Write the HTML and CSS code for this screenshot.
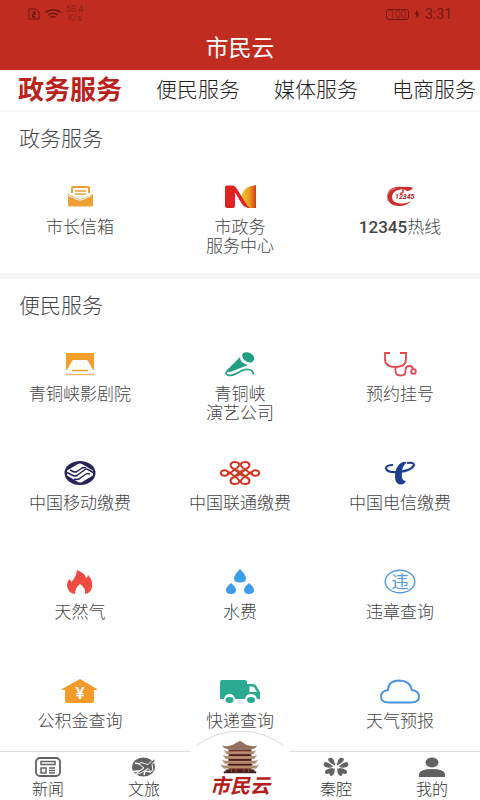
FILE: index.html
```html
<!DOCTYPE html>
<html lang="zh-CN">
<head>
<meta charset="utf-8">
<meta name="viewport" content="width=device-width, initial-scale=1">
<title>市民云</title>
<link rel="stylesheet" href="styles.css">
</head>
<body>
<div class="app">
  <header class="header">
    <div class="status">
      <div class="status-group">
        <svg class="status-sim" viewBox="0 0 12 12"><path d="M1 1h7l3 3v7H1z M4.500 4h3v2h-3v3h3 M6 3v7" fill="none" stroke="currentColor"/></svg>
        <svg class="status-wifi" viewBox="0 0 18 12"><path d="M1 4.500Q9-1 17 4.500M4 7Q9 3.500 14 7M6.500 9.500Q9 7.500 11.500 9.500" fill="none" stroke="currentColor" stroke-width="1.500"/></svg>
        <span class="status-speed">58.4<br>K/s</span>
      </div>
      <div class="status-group">
        <span class="status-battery">100</span>
        <svg class="status-bolt" viewBox="0 0 8 12"><path d="M4 1 1 6.500h2L4 11 7 5.500H5z" fill="currentColor"/></svg>
        <span class="status-time">3:31</span>
      </div>
    </div>
    <h1 class="title">市民云</h1>
  </header>

  <nav class="tabs" aria-label="服务分类">
    <a class="tab tab-active" href="#gov">政务服务</a>
    <a class="tab" href="#life">便民服务</a>
    <a class="tab" href="#media">媒体服务</a>
    <a class="tab" href="#shop">电商服务</a>
  </nav>

  <main class="content">
    <section class="section" id="gov">
      <h2 class="section-title">政务服务</h2>
      <div class="grid">
        <a class="item" href="#mail">
          <svg class="icon" viewBox="0 0 42 26">
            <path d="M13 9V4q0-1 1-1h15q1 0 1 1v5" fill="none" stroke="#eda135" stroke-width="2"/>
            <path d="M16 7h11M16 10h11" stroke="#eda135" stroke-width="1.500"/>
            <path d="M9 10 21 15.500 34 10V21q0 1.500-1.500 1.500h-22Q9 22.500 9 21V10z" fill="#eda135"/>
            <path d="M9.500 11.500 18 15.500q3 1.500 6 0l8.500-4" fill="none" stroke="#fff" stroke-width="1"/>
          </svg>
          <span>市长信箱</span>
        </a>
        <a class="item" href="#center">
          <svg class="icon" viewBox="0 0 42 26">
            <defs>
              <linearGradient id="sun" x1="0" x2="1"><stop offset="0" stop-color="#f3cd3b"/><stop offset=".6" stop-color="#eb941e"/><stop offset="1" stop-color="#cf3a1b"/></linearGradient>
            </defs>
            <path d="M37 1v23h-8q-7-3-7-10Q23 3 37 1z" fill="url(#sun)"/>
            <path d="M6 3q0-1.500 2-1.500h6q2 0 4 3.500l8 13q2 4 5 6-6 0-9-5l-6-10v13q0 2-2 2H8q-2 0-2-2z" fill="#dc2520"/>
            <path d="m16 9 7 12q2 3 5 3" fill="none" stroke="#fff" stroke-width=".8"/>
          </svg>
          <span>市政务<br>服务中心</span>
        </a>
        <a class="item" href="#hotline">
          <svg class="icon" viewBox="0 0 42 26">
            <path d="M34 4Q30 2 25 3 8 1 8 13.500 10 22 20 22q8 0 12-5-5 3-10 2.500Q13 19 13 13q0-6 9-8 4 0 6 2 4 0 6-3z" fill="#cc2f2d"/>
            <path d="M9 17Q6 8 16 4" fill="none" stroke="#e78b86"/>
            <path d="M19 6q3-3 5-1v3l-3 2" fill="none" stroke="#cc2f2d" stroke-width="1.500"/>
            <text x="16" y="15" class="hotline-number">12345</text>
          </svg>
          <span><b class="digits">12345</b>热线</span>
        </a>
      </div>
    </section>

    <section class="section" id="life">
      <h2 class="section-title">便民服务</h2>
      <div class="grid">
        <a class="item" href="#theatre">
          <svg class="icon" viewBox="0 0 42 26">
            <path d="M7 2h28v17h-1l-5-9q-.5-1-2-1H15q-1.500 0-2 1l-5 9H7z" fill="#f2a02c"/>
            <path d="M13 19.500h16" stroke="#f2a02c" stroke-width="1.500"/>
            <path d="M7 23.500h28" stroke="#e9b56b" stroke-width="1.500"/>
          </svg>
          <span>青铜峡影剧院</span>
        </a>
        <a class="item" href="#show">
          <svg class="icon" viewBox="0 0 42 26">
            <ellipse cx="29" cy="6.500" rx="6.500" ry="5" fill="#259f84" transform="rotate(25 29 6.500)"/>
            <path d="M21 6q0 6 8 8l-5 2-13 5q-3 0-3-2z" fill="#259f84"/>
            <path d="M22.500 4q0 7 9.500 8.500" fill="none" stroke="#fff" stroke-width="1.200"/>
            <path d="M10 19Q5 22 8.500 24q4 1.500 10-2 7-4.500 11-3.500 5 1 5 5" fill="none" stroke="#259f84" stroke-width="1.700"/>
          </svg>
          <span>青铜峡<br>演艺公司</span>
        </a>
        <a class="item" href="#register">
          <svg class="icon" viewBox="0 0 42 26">
            <g fill="none" stroke="#e04a50" stroke-width="1.800">
              <path d="M11 2H6v6q0 8 10.500 8T27 8V2h-6"/>
              <path d="M16.500 16v4q0 4.500 5 4.500t5-4V19q0-4 4-4 3 0 3.500 3"/>
              <circle cx="34.500" cy="20.500" r="2.300"/>
            </g>
          </svg>
          <span>预约挂号</span>
        </a>

        <a class="item" href="#mobile">
          <svg class="icon" viewBox="0 0 42 26">
            <ellipse cx="21" cy="13" rx="15.500" ry="12" fill="#272457"/>
            <path d="M8 10.500 19 4q2-1 4 0l11 6.500v5L23 22q-2 1-4 0L8 15.500z" fill="#fff"/>
            <g fill="none" stroke="#272457" stroke-width="1.500" stroke-linejoin="round">
              <path d="m7 12 7 3.500q2 1 4 0l8-6q1.500-1 3 0l6 3.500"/>
              <path d="m11 10 3 1.500q2 1 4 0l5-3.500q2-1 4 0"/>
              <path d="m15 19 3 .5q2 0 4-2l5-3.500q1.500-1 4 0"/>
            </g>
          </svg>
          <span>中国移动缴费</span>
        </a>
        <a class="item" href="#unicom">
          <svg class="icon" viewBox="0 0 42 26">
            <g fill="none" stroke="#ce3822" stroke-width="2">
              <path d="M9 14.500 18 8q3-2.500 2-4.500Q19 2 15.500 2T11.500 5Q11.500 7.500 15 9l9 7"/>
              <path d="m33 14.500-9-6.500q-3-2.500-2-4.500Q23 2 26.500 2t4 3Q30.500 7.500 27 9l-9 7"/>
              <path d="m9 11.500 9 6.500q3 2.500 2 4.500-1 1.500-4.500 1.500t-4-3q0-2.500 3.500-4l9-7"/>
              <path d="m33 11.500-9 6.500q-3 2.500-2 4.500 1 1.500 4.500 1.500t4-3q0-2.500-3.500-4l-9-7"/>
              <ellipse cx="5.500" cy="13" rx="3.800" ry="2.800"/>
              <ellipse cx="36.500" cy="13" rx="3.800" ry="2.800"/>
            </g>
          </svg>
          <span>中国联通缴费</span>
        </a>
        <a class="item" href="#telecom">
          <svg class="icon" viewBox="0 0 42 26">
            <path d="M19 6q4-5 8-4 1 1-1 2-3 3-3 9-1 8 4 8-2 4-6 3.500-5-1-5-8 0-7 3-10.500z" fill="#203f91"/>
            <path d="M14 5Q7 5 7 8.500q1 4.500 13 3.500 13-1.500 15-7 0-3-7-2" fill="none" stroke="#203f91" stroke-width="2.200"/>
          </svg>
          <span>中国电信缴费</span>
        </a>

        <a class="item" href="#gas">
          <svg class="icon" viewBox="0 0 42 26">
            <path d="M18 1q8 3 9 8 2-1 2-3 5 5 4 12-1 6-7 7 1-6-5-10-5 4-5 10-7-1-8-8 0-5 3-7l1 3q5-4 6-12z" fill="#ef4b42"/>
          </svg>
          <span>天然气</span>
        </a>
        <a class="item" href="#water">
          <svg class="icon" viewBox="0 0 42 26">
            <g fill="#3f9cec">
              <path d="M21 0q6 6 6 9.500 0 4-6 4t-6-4Q15 6 21 0z"/>
              <path d="M12 14q5 4 5 7 0 4-5 4t-5-4q0-3 5-7z"/>
              <path d="M30 14q5 4 5 7 0 4-5 4t-5-4q0-3 5-7z"/>
            </g>
          </svg>
          <span>水费</span>
        </a>
        <a class="item" href="#violation">
          <svg class="icon" viewBox="0 0 42 26">
            <ellipse cx="21" cy="12.500" rx="14.800" ry="11.300" fill="none" stroke="#4d9ae0" stroke-width="1.400"/>
            <text x="21" y="19" class="violation-mark">违</text>
          </svg>
          <span>违章查询</span>
        </a>

        <a class="item" href="#fund">
          <svg class="icon" viewBox="0 0 42 26">
            <path d="M20 1.500q1-.8 2 0L38 11v1h-3v11q0 2-2 2H8q-2 0-2-2V12H3v-1z" fill="#f29b2b"/>
            <text x="21" y="21" class="yen-mark">¥</text>
          </svg>
          <span>公积金查询</span>
        </a>
        <a class="item" href="#express">
          <svg class="icon" viewBox="0 0 42 26">
            <path d="M3 2h23q2 0 2 2v2h6q2 0 3 1.500l4 6.500v7h-3q-1-5-6-5t-6 5H16q-1-5-5.500-5T5 21H1V4q0-2 2-2z" fill="#2baa92"/>
            <path d="M30.500 8.500h3q1 0 2 1.500l2.500 4h-7.500z" fill="#fff"/>
            <ellipse cx="10.500" cy="22" rx="4" ry="3" fill="#2baa92"/>
            <ellipse cx="32" cy="22" rx="4" ry="3" fill="#2baa92"/>
          </svg>
          <span>快递查询</span>
        </a>
        <a class="item" href="#weather">
          <svg class="icon" viewBox="0 0 42 26">
            <path d="M10 24.500q-8 0-8-6 0-5.500 7-6.500 0-9 11-9.500 11 0 13 9.500 7 1 7 6.500 0 6-8 6z" fill="none" stroke="#4796e0" stroke-width="1.900"/>
          </svg>
          <span>天气预报</span>
        </a>
      </div>
    </section>
  </main>

  <nav class="bottom" aria-label="主导航">
    <a class="nav-item" href="#news">
      <svg class="nav-icon" viewBox="0 0 26 20">
        <rect x="1" y="1" width="24" height="18" rx="4" fill="none" stroke="#626262" stroke-width="1.800"/>
        <path d="M6 4.500h14v3H6zM6 11h5v5H6zM14 11h6M14 13.500h6M14 16h6" fill="none" stroke="#626262" stroke-width="1.500"/>
      </svg>
      <span>新闻</span>
    </a>
    <a class="nav-item" href="#travel">
      <svg class="nav-icon" viewBox="0 0 26 20">
        <ellipse cx="12.500" cy="10" rx="11.500" ry="9.500" fill="#626262"/>
        <path d="M1 14.500q7 .5 12-3M4 6l5 1M13 18l1-4 6 1" fill="none" stroke="#fff" stroke-width="1.500"/>
        <path d="m3 18 10-7-5-4 2-1.500 7 2 4-4q3-2 4-1l-4 5 1 6-2 1-3-3Q10 17 3 18z" fill="#626262" stroke="#fff" stroke-width="1"/>
      </svg>
      <span>文旅</span>
    </a>
    <a class="nav-item nav-home" href="#home">
      <svg class="hump" viewBox="0 0 104 24"><path d="M0 24Q23 1 52 1t52 23z" fill="#fff"/><path d="M8 16Q28 1 52 1t44 15" fill="none" stroke="#d9d9d9"/></svg>
      <svg class="tower" viewBox="0 0 42 34">
        <path d="M9 9h24v23H9z" fill="#6d2923"/>
        <path d="M21 0 27 4q7 3 12 1-1 3-6 4H9Q4 8 2 5q6 2 12-1z" fill="#92725d"/>
        <path d="M7 11h28l3-1-3 4H7l-3-4zM6 16h30l3-1-3 4H6l-3-4zM5 21h32l3-1-3 4H5l-3-4zM4 26h34l3-1-3 4H4l-4-4z" fill="#b38b70"/>
        <path d="M10 15h22M9 20h24M8 25h26" stroke="#3e1c1b" stroke-width="1.200"/>
        <path d="M6 31h30M4 33h34" stroke="#422522" stroke-width="2"/>
        <path d="M12 29v4M17 29v4M25 29v4M30 29v4" stroke="#c64a36"/>
      </svg>
      <span class="brand">市民云</span>
    </a>
    <a class="nav-item" href="#opera">
      <svg class="nav-icon" viewBox="0 0 26 20">
        <g fill="#626262">
          <path d="M11 8Q5 5 5 2q2-2 4-1 3 2 3 7zM10 10Q4 12 1 9q-1-2 1-4 6 1 8 5zM10 11q-1 6-7 6-2-2 0-4 3-2 7-2zM11.500 11q1 6-3 8-2 0-2-2 1-4 5-6z"/>
          <path d="M15 8q6-3 6-6-2-2-4-1-3 2-3 7zM16 10q6 2 9-1 1-2-1-4-6 1-8 5zM16 11q1 6 7 6 2-2 0-4-3-2-7-2zM14.500 11q-1 6 3 8 2 0 2-2-1-4-5-6z"/>
        </g>
      </svg>
      <span>秦腔</span>
    </a>
    <a class="nav-item" href="#mine">
      <svg class="nav-icon" viewBox="0 0 26 20">
        <ellipse cx="13" cy="5.500" rx="6.500" ry="5" fill="#626262"/>
        <path d="M0 20v-3q1-5 13-5t13 5v3z" fill="#626262"/>
      </svg>
      <span>我的</span>
    </a>
  </nav>
</div>
</body>
</html>
```
FILE: styles.css
```css
* {
  box-sizing: border-box;
}

body {
  margin: 0;
  background: #fff;
  color: #444;
  font-family: Roboto, "Noto Sans CJK SC", sans-serif;
  font-weight: 300;
}

a {
  color: inherit;
  text-decoration: none;
}

.app {
  display: flex;
  flex-direction: column;
  height: 100vh;
}

.header {
  flex: none;
  background: #c02c20;
}

.status {
  display: flex;
  justify-content: space-between;
  align-items: center;
  height: 28px;
  padding: 0 28px;
  color: #701811;
}

.status-group {
  display: flex;
  align-items: center;
  gap: 4px;
}

.status-sim {
  width: 12px;
  height: 12px;
}

.status-wifi {
  width: 18px;
  height: 12px;
}

.status-speed {
  font-size: 9px;
  line-height: 9px;
  text-align: center;
}

.status-battery {
  padding: 0 2px;
  border: 1px solid currentColor;
  border-radius: 3px;
  font-size: 10px;
  line-height: 9px;
}

.status-bolt {
  width: 8px;
  height: 10px;
}

.status-time {
  font-size: 14px;
  font-weight: 400;
}

.title {
  margin: 0;
  color: #fff;
  font-size: 23px;
  font-weight: 400;
  line-height: 42px;
  text-align: center;
}

.tabs {
  display: flex;
  flex: none;
  align-items: center;
  gap: 34px;
  height: 42px;
  padding-left: 18px;
  border-bottom: 2px solid #f6f6f6;
  overflow: hidden;
  white-space: nowrap;
}

.tab {
  color: #222;
  font-size: 21px;
  line-height: 40px;
}

.tab-active {
  color: #b9231b;
  font-size: 26px;
  font-weight: 700;
}

.content {
  flex: 1;
  min-height: 0;
  overflow-y: auto;
  scrollbar-width: none;
}

.section + .section {
  margin-top: 5px;
  border-top: 6px solid #f6f6f6;
}

.section-title {
  margin: 0;
  padding-left: 19px;
  font-size: 21px;
  font-weight: 300;
  line-height: 54px;
}

.grid {
  display: grid;
  grid-template-columns: repeat(3, 1fr);
  grid-auto-rows: minmax(102px, auto);
  row-gap: 7px;
}

.item {
  display: flex;
  flex-direction: column;
  align-items: center;
  gap: 8px;
  padding-top: 18px;
  font-size: 17px;
  line-height: 19px;
  text-align: center;
}

.icon {
  width: 42px;
  height: 26px;
}

.digits {
  font-size: 17px;
  font-weight: 500;
}

.hotline-number {
  fill: #b9231b;
  font-size: 7px;
  font-style: italic;
  font-weight: 700;
}

.violation-mark {
  fill: #4d9ae0;
  font-size: 17px;
  font-weight: 400;
  text-anchor: middle;
}

.yen-mark {
  fill: #fff;
  font-size: 17px;
  font-weight: 500;
  text-anchor: middle;
}

.bottom {
  position: relative;
  display: grid;
  grid-template-columns: repeat(5, 1fr);
  grid-template-rows: 48px;
  flex: none;
  border-top: 1px solid #dedede;
  background: #fff;
}

.nav-item {
  display: flex;
  flex-direction: column;
  align-items: center;
  gap: 3px;
  padding-top: 5px;
  color: #333;
  font-size: 16px;
  line-height: 20px;
}

.nav-icon {
  width: 26px;
  height: 20px;
}

.nav-home {
  position: relative;
  justify-content: flex-end;
  gap: 0;
  padding: 0 0 2px;
}

.hump {
  position: absolute;
  bottom: 46px;
  width: 104px;
  height: 24px;
}

.tower {
  position: relative;
  flex: none;
  width: 40px;
  height: 34px;
}

.brand {
  position: relative;
  color: #b71c1c;
  font-size: 20px;
  font-style: italic;
  font-weight: 700;
  line-height: 24px;
}
```
